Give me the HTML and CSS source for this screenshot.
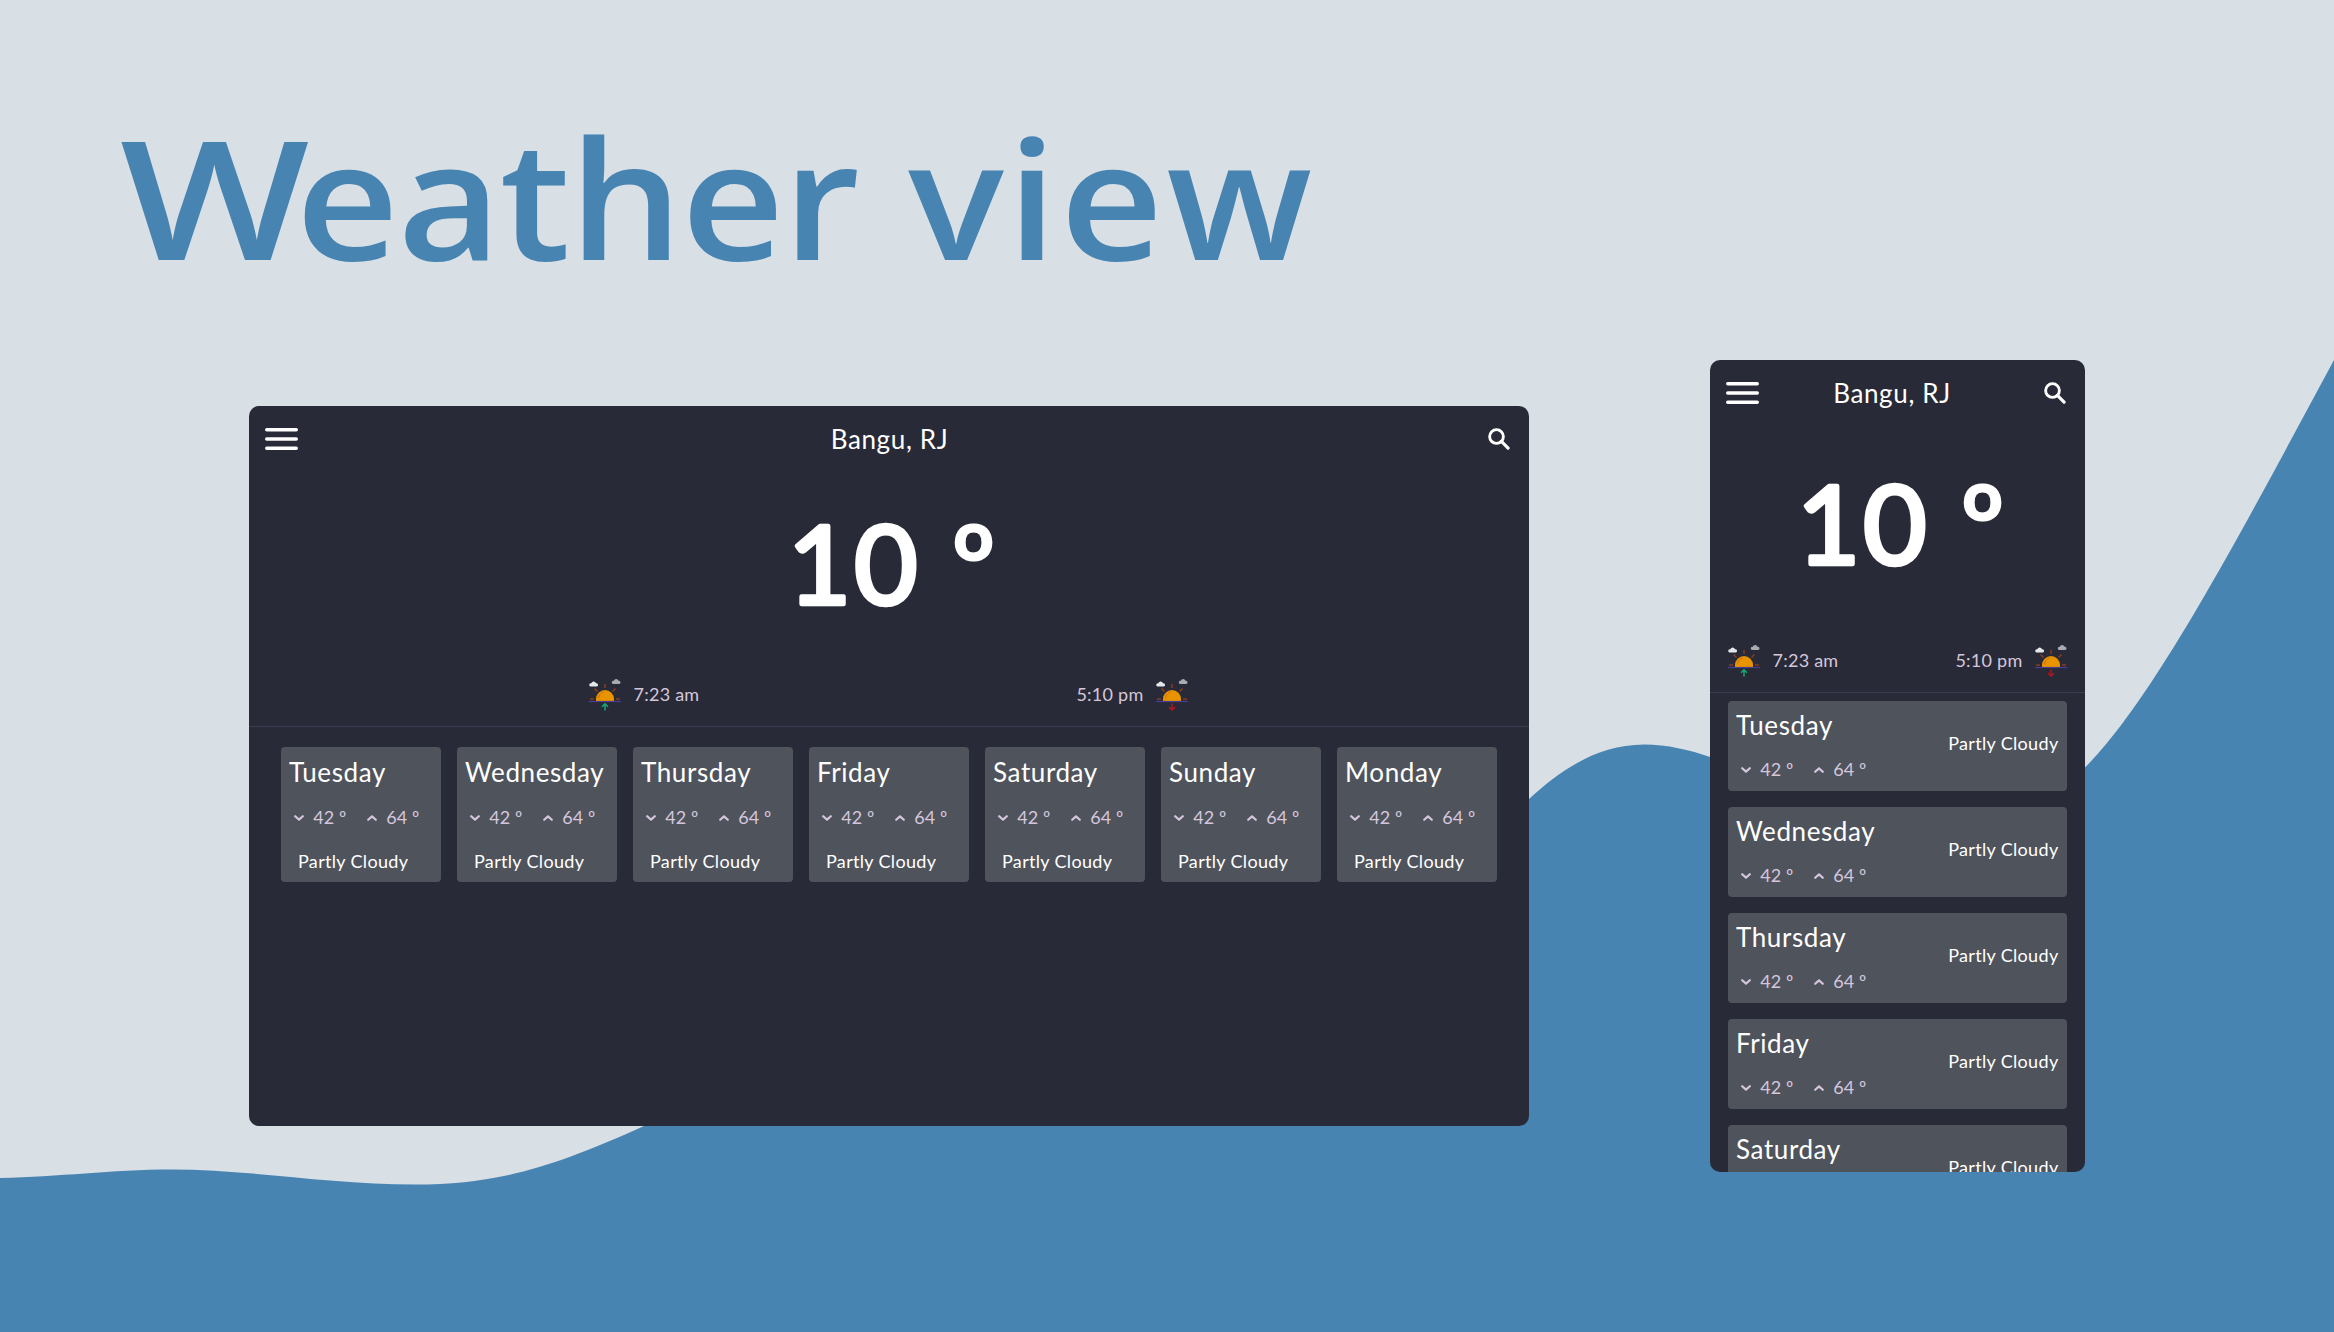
FILE: index.html
```html
<!DOCTYPE html>
<html lang="en">
<head>
<meta charset="utf-8">
<title>Weather view</title>
<link rel="stylesheet" href="styles.css">
</head>
<body>
<svg class="wave" viewBox="0 0 2334 1332" aria-hidden="true"><path d="M0 1178C60 1177 110 1169.500 172 1169.500C250 1169.500 330 1184.500 415 1184.500C498 1184.500 553 1167 644 1126C1000 967 1290 1000 1529 799C1565 766 1600 745 1644 744.500C1667 744.500 1690 750 1710 757C1850 806 1960 890 2085 767.500C2155 698 2246 523 2334 360V1332H0Z"/></svg>

<svg class="defs" aria-hidden="true">
  <symbol id="menu" viewBox="0 0 33 22"><path d="M1.800 1.800H31.200M1.800 11H31.200M1.800 20.200H31.200" stroke="#fff" stroke-width="3.600" stroke-linecap="round"/></symbol>
  <symbol id="search" viewBox="0 0 23 23"><g fill="none" stroke="#fff" stroke-width="3" stroke-linecap="round"><circle cx="8.900" cy="8.900" r="7.200"/><path d="M14 14L21 21" stroke-width="3.300"/></g></symbol>
  <symbol id="sun" viewBox="0 0 32 32">
    <path d="M1.500 7.500a1.700 1.700 0 0 1 .8-3.300a2.500 2.500 0 0 1 4.700 0a1.700 1.700 0 0 1 .8 3.300Z" fill="#e6e7ea"/>
    <path d="M24 5a1.700 1.700 0 0 1 .8-3.300a2.500 2.500 0 0 1 4.700 0a1.700 1.700 0 0 1 .8 3.300Z" fill="#a9abb1"/>
    <path d="M7 22v-2a9 9 0 0 1 18 0v2Z" fill="#e89300"/>
    <path d="M9.500 19.500q.3-5 5-6.500" fill="none" stroke="#d86a08" stroke-width="1" stroke-dasharray="5 1"/>
    <path d="M16 5v4M5.500 9.500l3 3M26.500 9.500l-3 3M1 20h4M27 20h4" fill="none" stroke="#8c3a22" stroke-width="1.500"/>
    <path d="M0 22.500h32" stroke="#473f96" stroke-width="1.200"/>
  </symbol>
  <symbol id="rise" viewBox="0 0 32 32"><use href="#sun"/><path d="M16 31.500V25M13 27.800l3-3l3 3" fill="none" stroke="#16a876" stroke-width="1.500"/></symbol>
  <symbol id="set" viewBox="0 0 32 32"><use href="#sun"/><path d="M16 24.500V31M13 28l3 3l3-3" fill="none" stroke="#b4141e" stroke-width="1.500"/></symbol>
  <symbol id="down" viewBox="0 0 10 6"><path d="M1.200 1.200L5 4.600L8.800 1.200" fill="none" stroke="#d5c6dc" stroke-width="2.200" stroke-linecap="round" stroke-linejoin="round"/></symbol>
  <symbol id="up" viewBox="0 0 10 6"><path d="M1.200 4.800L5 1.400L8.800 4.800" fill="none" stroke="#d5c6dc" stroke-width="2.200" stroke-linecap="round" stroke-linejoin="round"/></symbol>
</svg>

<h1 class="title"><span class="title-cap">W</span><span class="title-rest">eather</span> <span class="title-end">view</span></h1>

<main class="screens">
  <section class="screen desktop">
    <header class="bar">
      <svg class="menu"><use href="#menu"/></svg>
      <h2 class="city">Bangu, RJ</h2>
      <svg class="search"><use href="#search"/></svg>
    </header>
    <svg class="now" viewBox="0 0 210 90"><text x="0" y="83.500">10</text><text class="deg" x="163" y="85.500">º</text></svg>
    <div class="sun-times">
      <div class="sun-time"><svg class="sun"><use href="#rise"/></svg><span>7:23 am</span></div>
      <div class="sun-time"><span>5:10 pm</span><svg class="sun"><use href="#set"/></svg></div>
    </div>
    <div class="days">
      <article class="day"><div class="info"><h3>Tuesday</h3><div class="temps"><span class="temp"><svg><use href="#down"/></svg>42 º</span><span class="temp"><svg><use href="#up"/></svg>64 º</span></div></div><p>Partly Cloudy</p></article>
      <article class="day"><div class="info"><h3>Wednesday</h3><div class="temps"><span class="temp"><svg><use href="#down"/></svg>42 º</span><span class="temp"><svg><use href="#up"/></svg>64 º</span></div></div><p>Partly Cloudy</p></article>
      <article class="day"><div class="info"><h3>Thursday</h3><div class="temps"><span class="temp"><svg><use href="#down"/></svg>42 º</span><span class="temp"><svg><use href="#up"/></svg>64 º</span></div></div><p>Partly Cloudy</p></article>
      <article class="day"><div class="info"><h3>Friday</h3><div class="temps"><span class="temp"><svg><use href="#down"/></svg>42 º</span><span class="temp"><svg><use href="#up"/></svg>64 º</span></div></div><p>Partly Cloudy</p></article>
      <article class="day"><div class="info"><h3>Saturday</h3><div class="temps"><span class="temp"><svg><use href="#down"/></svg>42 º</span><span class="temp"><svg><use href="#up"/></svg>64 º</span></div></div><p>Partly Cloudy</p></article>
      <article class="day"><div class="info"><h3>Sunday</h3><div class="temps"><span class="temp"><svg><use href="#down"/></svg>42 º</span><span class="temp"><svg><use href="#up"/></svg>64 º</span></div></div><p>Partly Cloudy</p></article>
      <article class="day"><div class="info"><h3>Monday</h3><div class="temps"><span class="temp"><svg><use href="#down"/></svg>42 º</span><span class="temp"><svg><use href="#up"/></svg>64 º</span></div></div><p>Partly Cloudy</p></article>
    </div>
  </section>

  <section class="screen mobile">
    <header class="bar">
      <svg class="menu"><use href="#menu"/></svg>
      <h2 class="city">Bangu, RJ</h2>
      <svg class="search"><use href="#search"/></svg>
    </header>
    <svg class="now" viewBox="0 0 210 90"><text x="0" y="83.500">10</text><text class="deg" x="163" y="85.500">º</text></svg>
    <div class="sun-times">
      <div class="sun-time"><svg class="sun"><use href="#rise"/></svg><span>7:23 am</span></div>
      <div class="sun-time"><span>5:10 pm</span><svg class="sun"><use href="#set"/></svg></div>
    </div>
    <div class="days">
      <article class="day"><div class="info"><h3>Tuesday</h3><div class="temps"><span class="temp"><svg><use href="#down"/></svg>42 º</span><span class="temp"><svg><use href="#up"/></svg>64 º</span></div></div><p>Partly Cloudy</p></article>
      <article class="day"><div class="info"><h3>Wednesday</h3><div class="temps"><span class="temp"><svg><use href="#down"/></svg>42 º</span><span class="temp"><svg><use href="#up"/></svg>64 º</span></div></div><p>Partly Cloudy</p></article>
      <article class="day"><div class="info"><h3>Thursday</h3><div class="temps"><span class="temp"><svg><use href="#down"/></svg>42 º</span><span class="temp"><svg><use href="#up"/></svg>64 º</span></div></div><p>Partly Cloudy</p></article>
      <article class="day"><div class="info"><h3>Friday</h3><div class="temps"><span class="temp"><svg><use href="#down"/></svg>42 º</span><span class="temp"><svg><use href="#up"/></svg>64 º</span></div></div><p>Partly Cloudy</p></article>
      <article class="day"><div class="info"><h3>Saturday</h3></div><p>Partly Cloudy</p></article>
    </div>
  </section>
</main>
</body>
</html>
```
FILE: styles.css
```css
* { box-sizing: border-box; }

body {
  margin: 0;
  width: 2334px;
  height: 1332px;
  overflow: hidden;
  position: relative;
  background: #d8dfe5;
  font-family: Lato, "Noto Sans", sans-serif;
  color: #fff;
}

h1, h2, h3, p { margin: 0; font-weight: 400; }
svg { display: block; flex: none; }

.wave { position: absolute; inset: 0; width: 2334px; height: 1332px; fill: #4784b2; z-index: -1; }
.defs { position: absolute; width: 0; height: 0; }

.title {
  width: 1200px;
  height: 360px;
  padding: 96px 0 0;
  margin-left: 120px;
  font: 600 165px/200px "Open Sans", sans-serif;
  white-space: nowrap;
  color: #4784b2;
  transform: scaleX(1.085);
  transform-origin: 0 0;
}
.title-cap { display: inline-block; transform: scaleX(1.12); transform-origin: 0 0; margin-right: 6px; }
.title-rest { letter-spacing: -1.4px; }
.title-end { letter-spacing: 2.8px; margin-left: 3px; }

.screens { display: flex; align-items: flex-start; gap: 181px; padding-left: 249px; }
.screen { display: flex; flex-direction: column; flex: none; background: #282b37; border-radius: 10px; overflow: hidden; }
.desktop { width: 1280px; height: 720px; margin-top: 46px; }
.mobile { width: 375px; height: 812px; }

.bar { flex: none; height: 66px; padding: 0 19px 0 16px; display: grid; grid-template-columns: 1fr auto 1fr; align-items: center; }
.menu { width: 33px; height: 22px; }
.search { width: 22px; height: 22px; justify-self: end; }
.city { font-size: 26px; line-height: 30px; letter-spacing: .65px; transform: translateX(2px); }
.mobile .city { transform: translateX(-4px); }

.now { width: 210px; height: 90px; margin: 48px auto 69px; overflow: visible; transform: translateX(4px); }
.now text { font-size: 109px; fill: #fff; stroke: #fff; stroke-width: 4.5px; stroke-linejoin: round; letter-spacing: 3px; }
.now .deg { font-size: 112px; stroke-width: 3px; }
.mobile .now { margin: 54px auto 75px; }

.sun-times { flex: none; display: flex; justify-content: space-between; height: 48px; padding: 0 341px 0 340px; border-bottom: 1px solid #373e52; }
.mobile .sun-times { padding: 0 18px; }
.sun-time { display: flex; align-items: flex-start; gap: 12.5px; font-size: 18px; line-height: 30px; letter-spacing: .25px; color: #d5c6dc; }
.sun { width: 32px; height: 32px; }

.days { display: flex; gap: 16px; padding: 20px 32px; }
.mobile .days { flex-direction: column; padding: 8px 18px; }
.day { flex: none; width: 160px; height: 135px; border-radius: 4px; background: #4f535c; }
.day h3 { height: 48px; padding-left: 8px; font-size: 26px; line-height: 50px; letter-spacing: .6px; }
.day p { padding-left: 17px; font-size: 18px; line-height: 44px; letter-spacing: .33px; }
.temps { display: flex; height: 44px; padding-left: 13px; font-size: 18px; line-height: 45px; color: #d5c6dc; }
.temp { display: flex; align-items: center; width: 73px; word-spacing: .2px; }
.temp svg { width: 10px; height: 6px; margin: 1px 9.200px 0 0; }

.mobile .day { display: flex; justify-content: space-between; width: 339px; height: 90px; }
.mobile .day h3 { height: 47px; line-height: 49px; }
.mobile .temps { height: 43px; line-height: 45px; }
.mobile .day p { padding: 0 8.500px 0 0; line-height: 84px; }
```
